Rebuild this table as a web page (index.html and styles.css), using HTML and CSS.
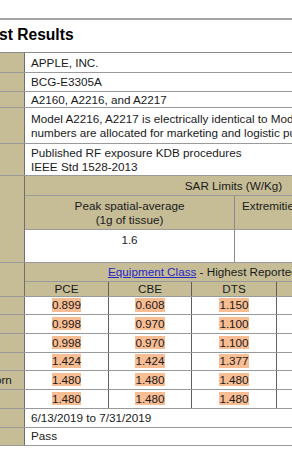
FILE: index.html
```html
<!DOCTYPE html>
<html>
<head>
<meta charset="utf-8">
<link rel="stylesheet" href="styles.css">
</head>
<body>
<div class="page">
  <h2 class="title">Test Results</h2>
  <div class="sheet">
    <div class="row h20"><div class="lbl"></div><div class="val">APPLE, INC.</div></div>
    <div class="row h19"><div class="lbl"></div><div class="val">BCG-E3305A</div></div>
    <div class="row h16"><div class="lbl"></div><div class="val">A2160, A2216, and A2217</div></div>
    <div class="row h36"><div class="lbl"></div><div class="val">Model A2216, A2217 is electrically identical to Model A2160, the model<br>numbers are allocated for marketing and logistic purposes.</div></div>
    <div class="row h32"><div class="lbl"></div><div class="val">Published RF exposure KDB procedures<br>IEEE Std 1528-2013</div></div>

    <div class="sec">
      <div class="lbl"></div>
      <div class="nest">
        <div class="nrow head h20"><div class="wide center">SAR Limits (W/Kg)</div></div>
        <div class="nrow head h34">
          <div class="peak center top">Peak spatial-average<br>(1g of tissue)</div>
          <div class="ext top">Extremities</div>
        </div>
        <div class="nrow h32">
          <div class="peak center top">1.6</div>
          <div class="ext top"></div>
        </div>
      </div>
    </div>

    <div class="sec">
      <div class="lbl"></div>
      <div class="nest">
        <div class="nrow head h19"><div class="wide classline"><span class="lnk">Equipment Class</span>&nbsp;- Highest Reported SAR (W/kg)</div></div>
        <div class="nrow head h18 grid">
          <div class="cell">PCE</div><div class="cell">CBE</div><div class="cell">DTS</div><div class="cell last"></div>
        </div>
      </div>
    </div>

    <div class="row h18"><div class="lbl"></div><div class="grid"><div class="cell"><span class="hl">0.899</span></div><div class="cell"><span class="hl">0.608</span></div><div class="cell"><span class="hl">1.150</span></div><div class="cell last"></div></div></div>
    <div class="row h19"><div class="lbl"></div><div class="grid"><div class="cell"><span class="hl">0.998</span></div><div class="cell"><span class="hl">0.970</span></div><div class="cell"><span class="hl">1.100</span></div><div class="cell last"></div></div></div>
    <div class="row h19"><div class="lbl"></div><div class="grid"><div class="cell"><span class="hl">0.998</span></div><div class="cell"><span class="hl">0.970</span></div><div class="cell"><span class="hl">1.100</span></div><div class="cell last"></div></div></div>
    <div class="row h18"><div class="lbl"></div><div class="grid"><div class="cell"><span class="hl">1.424</span></div><div class="cell"><span class="hl">1.424</span></div><div class="cell"><span class="hl">1.377</span></div><div class="cell last"></div></div></div>
    <div class="row h19"><div class="lbl">Body-worn</div><div class="grid"><div class="cell"><span class="hl">1.480</span></div><div class="cell"><span class="hl">1.480</span></div><div class="cell"><span class="hl">1.480</span></div><div class="cell last"></div></div></div>
    <div class="row h19"><div class="lbl"></div><div class="grid"><div class="cell"><span class="hl">1.480</span></div><div class="cell"><span class="hl">1.480</span></div><div class="cell"><span class="hl">1.480</span></div><div class="cell last"></div></div></div>

    <div class="row h19"><div class="lbl"></div><div class="val">6/13/2019 to 7/31/2019</div></div>
    <div class="row h18"><div class="lbl"></div><div class="val">Pass</div></div>
  </div>
</div>
</body>
</html>
```

FILE: styles.css
```css
* { box-sizing: border-box; }
html, body { margin: 0; padding: 0; overflow: hidden; background: #fff; }
body {
  font-family: "Liberation Sans", Arial, sans-serif;
  font-size: 11.7px;
  line-height: 13.5px;
  color: #1a1a1a;
}
.page { margin-left: -49px; width: 560px; }
.title {
  margin: 18px 0 0;
  border-top: 2px solid #a4a4a4;
  border-bottom: 1px solid #8a8a8a;
  padding: 6px 0 8px 31px;
  font-size: 15.6px;
  line-height: 18px;
  font-weight: bold;
  color: #000;
}
.row { display: flex; border-bottom: 1px solid #9a9a9a; }
.lbl {
  width: 74px;
  flex: none;
  background: #c6bd96;
  border-right: 1px solid #6f6f6f;
  padding: 0 5px;
  display: flex;
  align-items: center;
  white-space: nowrap;
}
.val {
  flex: 1;
  padding: 0 6px;
  display: flex;
  align-items: center;
  white-space: nowrap;
}
.sec { display: flex; border-bottom: 1px solid #9a9a9a; }
.nest { flex: 1; display: flex; flex-direction: column; }
.nrow { display: flex; border-bottom: 1px solid #9a9a9a; }
.nrow:last-child { border-bottom: 0; }
.head { background: #c6bd96; }
.wide { width: 417px; display: flex; align-items: center; white-space: nowrap; }
.center { justify-content: center; text-align: center; }
.peak { width: 210px; border-right: 1px solid #8a8a8a; display: flex; }
.ext { flex: 1; padding-left: 7px; display: flex; white-space: nowrap; }
.top { align-items: flex-start; padding-top: 3px; }
.classline { padding-left: 83px; }
.lnk { color: #2626c6; text-decoration: underline; }
.grid { flex: 1; display: grid; grid-template-columns: 84px 83px 85px 1fr; }
.cell {
  border-right: 1px solid #5e5e5e;
  display: flex;
  align-items: center;
  justify-content: center;
}
.cell.last { border-right: 0; }
.hl { background: #f9bd93; }
.h16 { height: 16px; }
.h18 { height: 18px; }
.h19 { height: 19px; }
.h20 { height: 20px; }
.h32 { height: 32px; }
.h34 { height: 34px; }
.h36 { height: 36px; }
```
